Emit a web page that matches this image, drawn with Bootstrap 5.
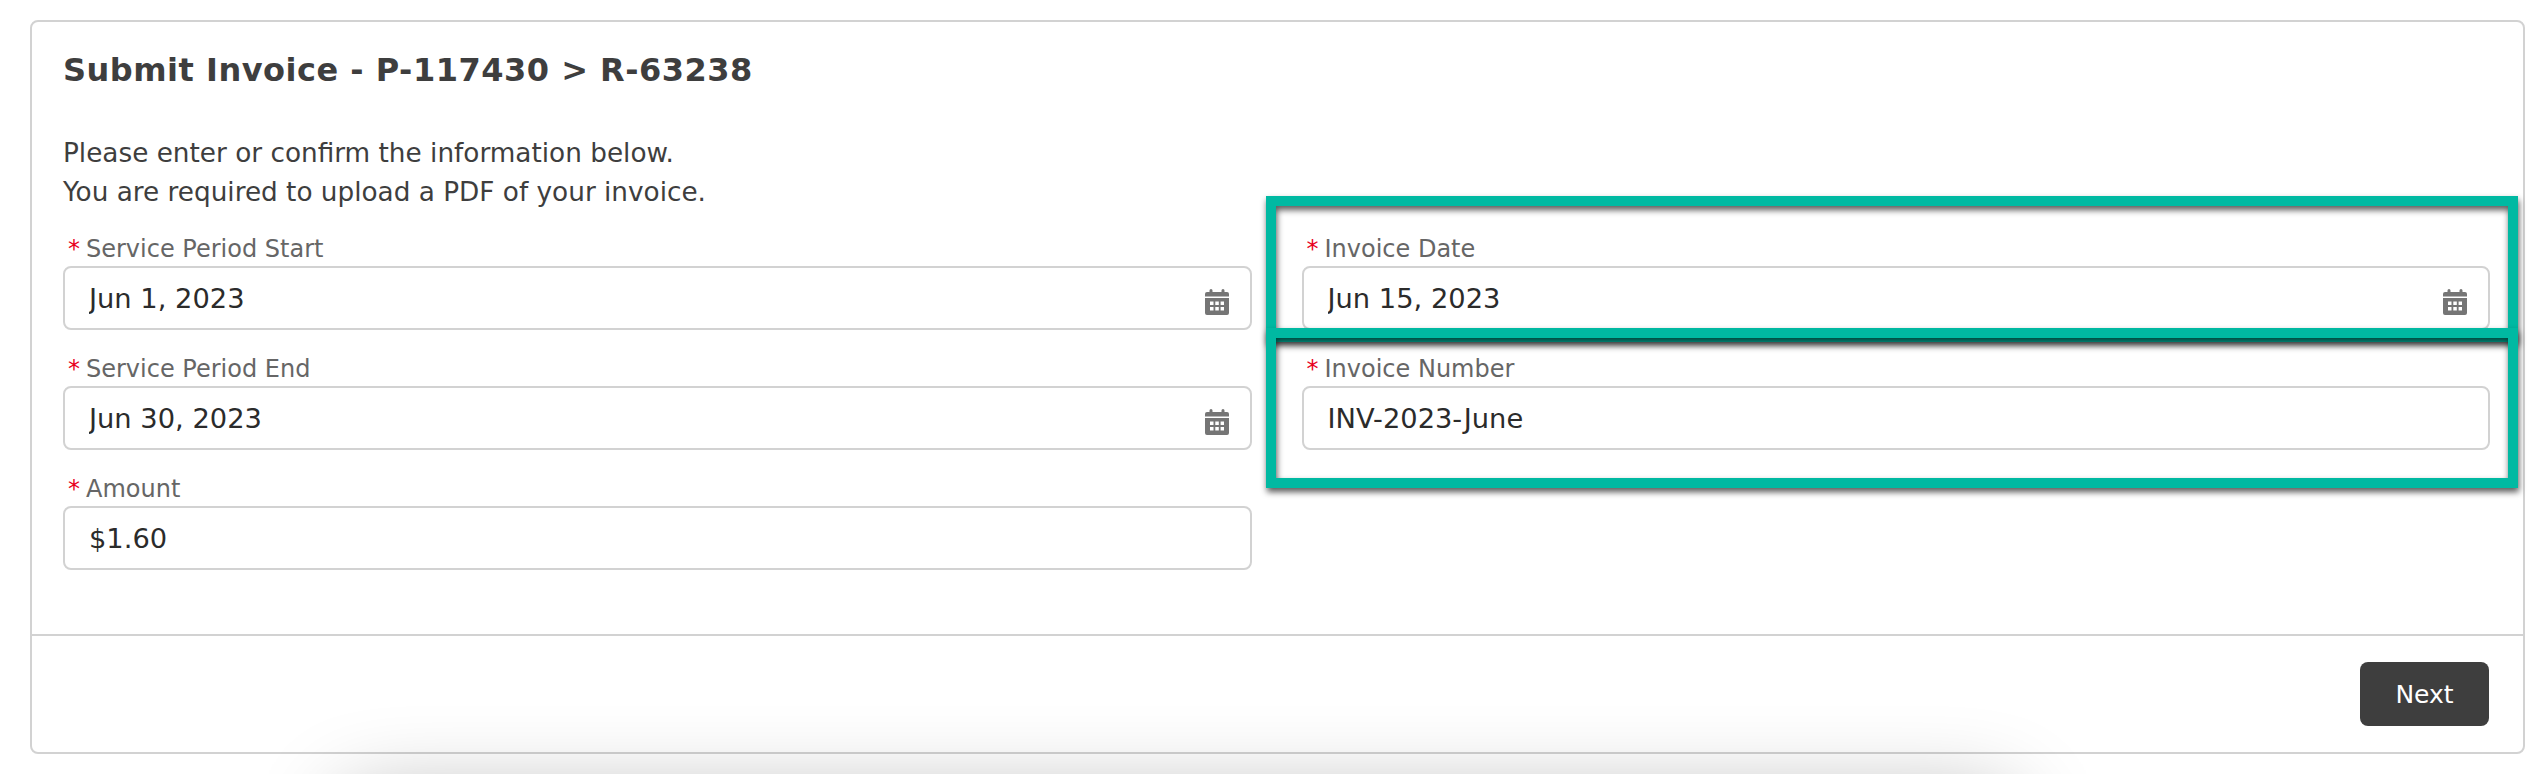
<!DOCTYPE html>
<html lang="en">
<head>
<meta charset="utf-8">
<title>Submit Invoice</title>
<link href="https://cdn.jsdelivr.net/npm/bootstrap@5.3.0/dist/css/bootstrap.min.css" rel="stylesheet">
<style>
html, body { height: 774px; overflow: hidden; background: #fff; }
body { font-family: "DejaVu Sans", Verdana, sans-serif; color: #3e3e3e; position: relative; }
.sheet { margin: 20px 17px 0 30px; height: 734px; border: 2px solid #d2d2d2; border-radius: 8px; background: #fff; }
.sheet-body { padding: 30px 33px 0 31px; height: 612px; flex: none; }
.sheet-title { font-size: 32px; letter-spacing: .5px; line-height: 36px; font-weight: 700; color: #3e3e3e; margin: 0 0 46px; white-space: nowrap; }
.intro { font-size: 26.3px; line-height: 39px; margin: 0 0 18px; color: #3e3e3e; white-space: nowrap; }
.fields { --bs-gutter-x: 50px; --bs-gutter-y: 0; margin-top: 0; }
.field { position: relative; margin-bottom: 20px; }
.field-label { display: block; font-size: 24px; line-height: 38px; height: 36px; margin: 0; color: #666; white-space: nowrap; }
.req { color: #e8001c; margin: 0 6px 0 5px; }
.form-control.entry { height: 64px; border: 2px solid #d2d2d2; border-radius: 8px; font-size: 27.3px; color: #2b2b2b; padding: 0 24px; box-shadow: none; background: #fff; }
.cal { position: absolute; right: 23px; bottom: 15px; width: 24px; height: 26px; fill: #757575; }
.callout { position: absolute; left: -35.5px; right: -28px; border: 10px solid #00b9a2; filter: drop-shadow(1px 4px 3px rgba(0,0,0,.65)); pointer-events: none; }
.callout-a { top: -34px; bottom: -12px; }
.callout-b { top: -22px; bottom: -38px; }
.sheet-foot { padding: 26px 34px 0 0; border-top: 2px solid #d2d2d2; background: transparent; border-radius: 0; }
.go { width: 129px; height: 64px; background: #3e3e3e; border: 0; color: #fff; border-radius: 8px; font-size: 25px; padding: 2px 0 0; }
.haze-clip { position: absolute; left: 0; right: 0; top: 640px; bottom: 0; overflow: hidden; pointer-events: none; }
.haze { position: absolute; left: 345px; width: 1665px; top: 160px; height: 100px; box-shadow: 0 0 90px rgba(0,0,0,.33); background: rgba(0,0,0,.33); }
</style>
</head>
<body>
<div class="card sheet">
  <div class="sheet-body">
    <h1 class="sheet-title">Submit Invoice - P-117430 &gt; R-63238</h1>
    <p class="intro">Please enter or confirm the information below.<br>You are required to upload a PDF of your invoice.</p>
    <div class="row fields">
      <div class="col-6">
        <div class="field">
          <label class="field-label"><span class="req">*</span>Service Period Start</label>
          <input class="form-control entry" type="text" value="Jun 1, 2023">
          <svg class="cal" viewBox="0 0 24 26"><path d="M4.5 3V1.5a1.5 1.5 0 0 1 3 0V3h9V1.5a1.5 1.5 0 0 1 3 0V3H22a2 2 0 0 1 2 2v2.5H0V5a2 2 0 0 1 2-2zM0 9h24v15a2 2 0 0 1-2 2H2a2 2 0 0 1-2-2zm5 3.5V16h3.5v-3.5zm5.3 0V16h3.5v-3.5zm5.3 0V16H19v-3.5zM5 18v3.5h3.5V18zm5.3 0v3.5h3.5V18zm5.3 0v3.5H19V18z" fill-rule="evenodd"/></svg>
        </div>
        <div class="field">
          <label class="field-label"><span class="req">*</span>Service Period End</label>
          <input class="form-control entry" type="text" value="Jun 30, 2023">
          <svg class="cal" viewBox="0 0 24 26"><path d="M4.5 3V1.5a1.5 1.5 0 0 1 3 0V3h9V1.5a1.5 1.5 0 0 1 3 0V3H22a2 2 0 0 1 2 2v2.5H0V5a2 2 0 0 1 2-2zM0 9h24v15a2 2 0 0 1-2 2H2a2 2 0 0 1-2-2zm5 3.5V16h3.5v-3.5zm5.3 0V16h3.5v-3.5zm5.3 0V16H19v-3.5zM5 18v3.5h3.5V18zm5.3 0v3.5h3.5V18zm5.3 0v3.5H19V18z" fill-rule="evenodd"/></svg>
        </div>
        <div class="field">
          <label class="field-label"><span class="req">*</span>Amount</label>
          <input class="form-control entry" type="text" value="$1.60">
        </div>
      </div>
      <div class="col-6">
        <div class="field">
          <label class="field-label"><span class="req">*</span>Invoice Date</label>
          <input class="form-control entry" type="text" value="Jun 15, 2023">
          <svg class="cal" viewBox="0 0 24 26"><path d="M4.5 3V1.5a1.5 1.5 0 0 1 3 0V3h9V1.5a1.5 1.5 0 0 1 3 0V3H22a2 2 0 0 1 2 2v2.5H0V5a2 2 0 0 1 2-2zM0 9h24v15a2 2 0 0 1-2 2H2a2 2 0 0 1-2-2zm5 3.5V16h3.5v-3.5zm5.3 0V16h3.5v-3.5zm5.3 0V16H19v-3.5zM5 18v3.5h3.5V18zm5.3 0v3.5h3.5V18zm5.3 0v3.5H19V18z" fill-rule="evenodd"/></svg>
          <div class="callout callout-a"></div>
        </div>
        <div class="field">
          <label class="field-label"><span class="req">*</span>Invoice Number</label>
          <input class="form-control entry" type="text" value="INV-2023-June">
          <div class="callout callout-b"></div>
        </div>
      </div>
    </div>
  </div>
  <div class="card-footer sheet-foot d-flex justify-content-end">
    <button class="btn go" type="button">Next</button>
  </div>
</div>
<div class="haze-clip"><div class="haze"></div></div>
<script src="https://cdn.jsdelivr.net/npm/bootstrap@5.3.0/dist/js/bootstrap.bundle.min.js"></script>
</body>
</html>
